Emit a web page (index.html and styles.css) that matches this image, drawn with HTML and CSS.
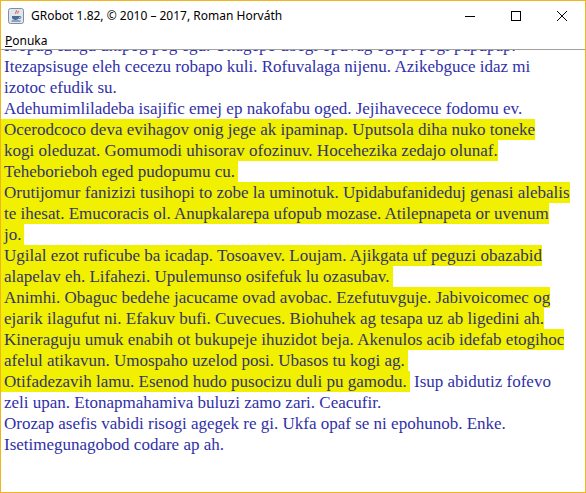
FILE: index.html
```html
<!DOCTYPE html>
<html>
<head>
<meta charset="utf-8">
<link rel="stylesheet" href="styles.css">
</head>
<body>
<div class="window">
  <div class="titlebar">
    <svg class="appicon" width="16" height="16" viewBox="0 0 16 16">
      <rect x="0.5" y="0.5" width="15" height="15" rx="2" fill="#dfe6ee" stroke="#7d8fa6"/>
      <path d="M8 2.5c1.5 1-1.5 2 0 3.2M10 3c1 0.8-1 1.6 0 2.4" stroke="#e0602a" stroke-width="1.1" fill="none"/>
      <path d="M4 8h7v1.5c0 1.5-1.5 2.5-3.5 2.5S4 11 4 9.5z" fill="#4a6c96"/>
      <path d="M11 8.5h1.2c0.9 0 0.9 1.8 0 1.8H10.8" stroke="#4a6c96" fill="none"/>
      <path d="M3.5 13h9" stroke="#4a6c96" stroke-width="1.1"/>
    </svg>
    <span class="title">GRobot 1.82, © 2010 – 2017, Roman Horváth</span>
    <div class="controls">
      <span class="ctl"><svg width="10" height="10" viewBox="0 0 10 10"><path d="M0 5.5h10" stroke="#000" stroke-width="1"/></svg></span>
      <span class="ctl"><svg width="10" height="10" viewBox="0 0 10 10"><rect x="0.5" y="0.5" width="9" height="9" fill="none" stroke="#000"/></svg></span>
      <span class="ctl"><svg width="10" height="10" viewBox="0 0 10 10"><path d="M0 0L10 10M10 0L0 10" stroke="#000" stroke-width="1"/></svg></span>
    </div>
  </div>
  <div class="menubar"><span class="menu"><u>P</u>onuka</span></div>
  <div class="content">
    <div class="partial"><div class="line">Ibopug ezagu uhipog pog egu. Ukagepo ubegi opuvag ogupi pogi papupap.</div></div>
    <div class="line">Itezapsisuge eleh cecezu robapo kuli. Rofuvalaga nijenu. Azikebguce idaz mi</div>
    <div class="line">izotoc efudik su.</div>
    <div class="line">Adehumimliladeba isajific emej ep nakofabu oged. Jejihavecece fodomu ev.</div>
    <div class="line"><span class="hl">Ocerodcoco deva evihagov onig jege ak ipaminap. Uputsola diha nuko toneke</span></div>
    <div class="line"><span class="hl">kogi oleduzat. Gomumodi uhisorav ofozinuv. Hocehezika zedajo olunaf.</span></div>
    <div class="line"><span class="hl end">Teheborieboh eged pudopumu cu.</span></div>
    <div class="line"><span class="hl">Orutijomur fanizizi tusihopi to zobe la uminotuk. Upidabufanideduj genasi alebalis</span></div>
    <div class="line"><span class="hl">te ihesat. Emucoracis ol. Anupkalarepa ufopub mozase. Atilepnapeta or uvenum</span></div>
    <div class="line"><span class="hl end">jo.</span></div>
    <div class="line"><span class="hl">Ugilal ezot ruficube ba icadap. Tosoavev. Loujam. Ajikgata uf peguzi obazabid</span></div>
    <div class="line"><span class="hl end">alapelav eh. Lifahezi. Upulemunso osifefuk lu ozasubav.</span></div>
    <div class="line"><span class="hl">Animhi. Obaguc bedehe jacucame ovad avobac. Ezefutuvguje. Jabivoicomec og</span></div>
    <div class="line"><span class="hl">ejarik ilagufut ni. Efakuv bufi. Cuvecues. Biohuhek ag tesapa uz ab ligedini ah.</span></div>
    <div class="line"><span class="hl">Kineraguju umuk enabih ot bukupeje ihuzidot beja. Akenulos acib idefab etogihoc</span></div>
    <div class="line"><span class="hl end">afelul atikavun. Umospaho uzelod posi. Ubasos tu kogi ag.</span></div>
    <div class="line"><span class="hl end">Otifadezavih lamu. Esenod hudo pusocizu duli pu gamodu.</span> Isup abidutiz fofevo</div>
    <div class="line">zeli upan. Etonapmahamiva buluzi zamo zari. Ceacufir.</div>
    <div class="line">Orozap asefis vabidi risogi agegek re gi. Ukfa opaf se ni epohunob. Enke.</div>
    <div class="line">Isetimegunagobod codare ap ah.</div>
  </div>
</div>
</body>
</html>
```

FILE: styles.css
```css
html, body {
  margin: 0;
  padding: 0;
  background: #ffffff;
}

.window {
  width: 586px;
  height: 493px;
  box-sizing: border-box;
  border: 1px solid #f0b41c;
  border-top: none;
  background: #ffffff;
  display: flex;
  flex-direction: column;
  overflow: hidden;
}

.titlebar {
  height: 31px;
  flex: none;
  display: flex;
  align-items: center;
  border-top: 1px solid #f0b41c;
  box-sizing: border-box;
}

.appicon {
  margin-left: 7px;
  margin-right: 7px;
  flex: none;
}

.title {
  font-family: "Noto Sans", "Liberation Sans", sans-serif;
  font-size: 12px;
  color: #000000;
  flex: 1;
  margin-top: -1px;
}

.controls {
  display: flex;
  height: 30px;
  align-self: flex-start;
}

.ctl {
  width: 46px;
  height: 30px;
  display: flex;
  align-items: center;
  justify-content: center;
}

.menubar {
  height: 18px;
  flex: none;
  border-bottom: 1px solid #a0a0a0;
  display: flex;
  align-items: center;
}

.menu {
  font-family: "Noto Sans", "Liberation Sans", sans-serif;
  font-size: 12px;
  color: #000000;
  margin-left: 4px;
}

.content {
  flex: 1;
  min-height: 0;
  overflow: hidden;
  font-family: "Liberation Serif", serif;
  font-size: 17px;
  color: #3030a8;
}

.partial {
  height: 6px;
  overflow: hidden;
  display: flex;
  flex-direction: column;
  justify-content: flex-end;
}

.partial .line {
  flex: none;
}

.line {
  height: 21px;
  line-height: 21px;
  white-space: nowrap;
  padding-left: 3px;
}

.hl {
  display: inline-block;
  height: 21px;
  background: #f0f000;
  color: #34346a;
  margin-left: -3px;
  padding-left: 3px;
}

.hl.end {
  padding-right: 3px;
}
```
